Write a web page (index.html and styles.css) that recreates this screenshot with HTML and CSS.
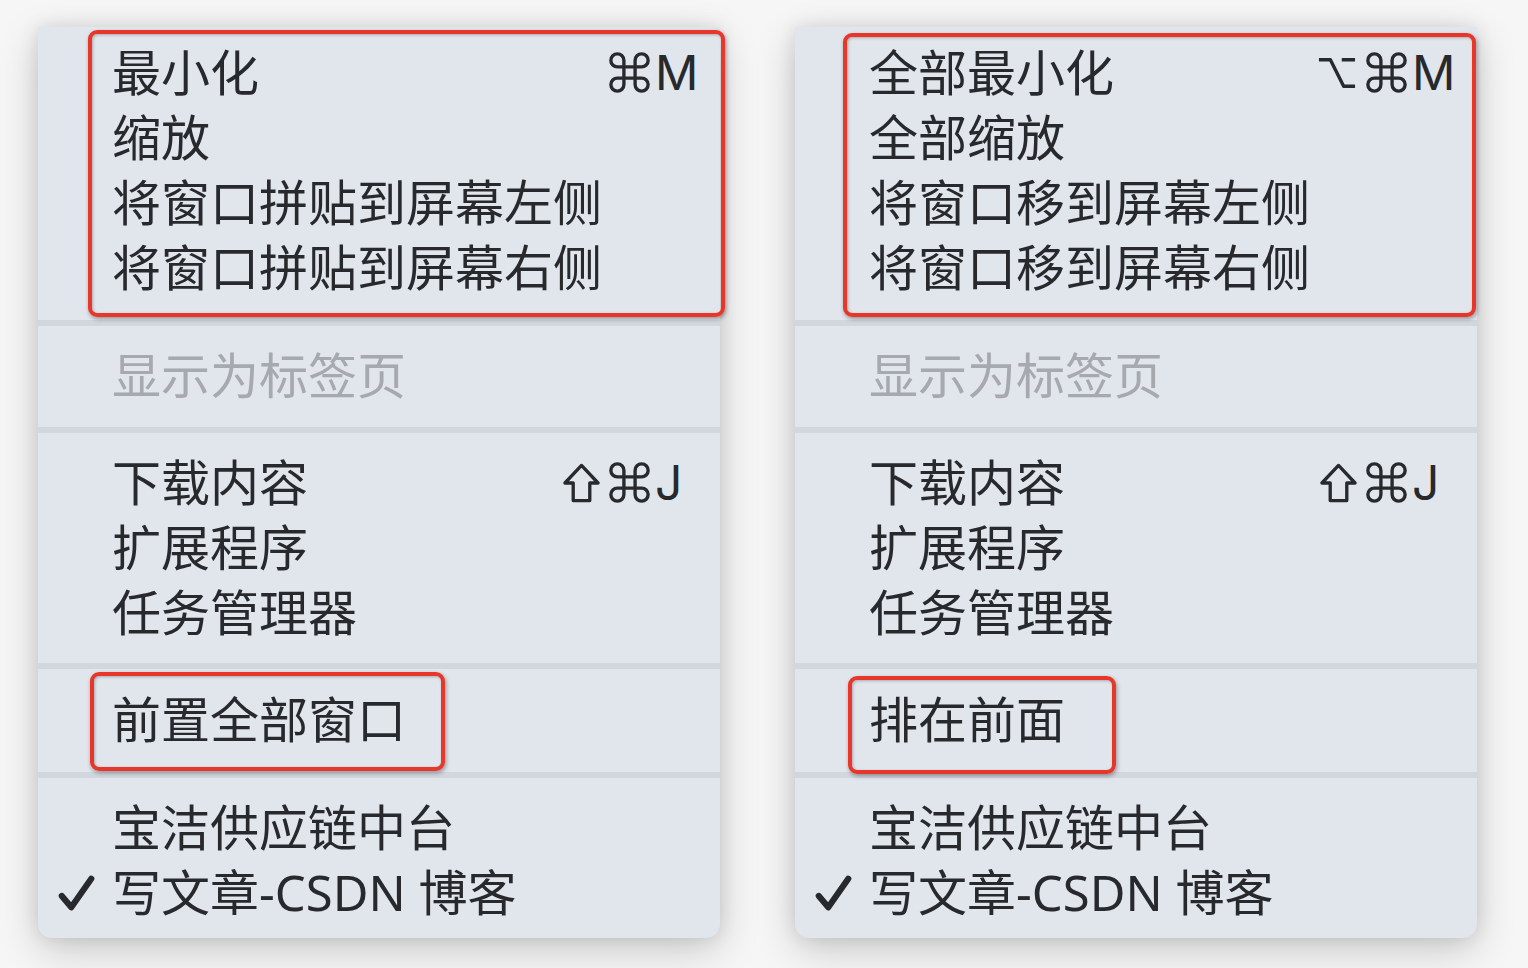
FILE: index.html
```html
<!DOCTYPE html>
<html lang="zh-CN">
<head>
<meta charset="utf-8">
<title>窗口菜单</title>
<link rel="stylesheet" href="styles.css">
</head>
<body>
<div class="stage">
  <div class="menu">
    <div class="section section-first">
      <div class="row"><span class="check"></span><span class="label">最小化</span>
        <span class="shortcut"><span class="mods"><svg class="key-icon cmd" viewBox="-2 -2 44 44"><path d="M14 14 V7 A7 7 0 1 0 7 14 H33 A7 7 0 1 0 26 7 V33 A7 7 0 1 0 33 26 H7 A7 7 0 1 0 14 33 Z"/></svg></span><span class="key">M</span></span></div>
      <div class="row"><span class="check"></span><span class="label">缩放</span></div>
      <div class="row"><span class="check"></span><span class="label">将窗口拼贴到屏幕左侧</span></div>
      <div class="row"><span class="check"></span><span class="label">将窗口拼贴到屏幕右侧</span></div>
    </div>
    <div class="sep"></div>
    <div class="section">
      <div class="row disabled"><span class="check"></span><span class="label">显示为标签页</span></div>
    </div>
    <div class="sep"></div>
    <div class="section section-three">
      <div class="row"><span class="check"></span><span class="label">下载内容</span>
        <span class="shortcut"><span class="mods"><svg class="key-icon shift" viewBox="0 0 40 40"><path d="M20 2 L37 20 H28.5 V38 H11.5 V20 H3 Z"/></svg><svg class="key-icon cmd" viewBox="-2 -2 44 44"><path d="M14 14 V7 A7 7 0 1 0 7 14 H33 A7 7 0 1 0 26 7 V33 A7 7 0 1 0 33 26 H7 A7 7 0 1 0 14 33 Z"/></svg></span><span class="key">J</span></span></div>
      <div class="row"><span class="check"></span><span class="label">扩展程序</span></div>
      <div class="row"><span class="check"></span><span class="label">任务管理器</span></div>
    </div>
    <div class="sep"></div>
    <div class="section section-four">
      <div class="row"><span class="check"></span><span class="label">前置全部窗口</span></div>
    </div>
    <div class="sep"></div>
    <div class="section section-last">
      <div class="row"><span class="check"></span><span class="label">宝洁供应链中台</span></div>
      <div class="row"><span class="check"><svg class="tick" viewBox="0 0 40 40"><path d="M4 22 L14 34 L35 4"/></svg></span><span class="label">写文章-CSDN 博客</span></div>
    </div>
    <div class="mark mark-left-top"></div>
    <div class="mark mark-left-bottom"></div>
  </div>

  <div class="menu">
    <div class="section section-first">
      <div class="row"><span class="check"></span><span class="label">全部最小化</span>
        <span class="shortcut"><span class="mods"><svg class="key-icon opt" viewBox="0 0 42 40"><path d="M2 6 H14 L28 34 H40 M26 6 H40"/></svg><svg class="key-icon cmd" viewBox="-2 -2 44 44"><path d="M14 14 V7 A7 7 0 1 0 7 14 H33 A7 7 0 1 0 26 7 V33 A7 7 0 1 0 33 26 H7 A7 7 0 1 0 14 33 Z"/></svg></span><span class="key">M</span></span></div>
      <div class="row"><span class="check"></span><span class="label">全部缩放</span></div>
      <div class="row"><span class="check"></span><span class="label">将窗口移到屏幕左侧</span></div>
      <div class="row"><span class="check"></span><span class="label">将窗口移到屏幕右侧</span></div>
    </div>
    <div class="sep"></div>
    <div class="section">
      <div class="row disabled"><span class="check"></span><span class="label">显示为标签页</span></div>
    </div>
    <div class="sep"></div>
    <div class="section section-three">
      <div class="row"><span class="check"></span><span class="label">下载内容</span>
        <span class="shortcut"><span class="mods"><svg class="key-icon shift" viewBox="0 0 40 40"><path d="M20 2 L37 20 H28.5 V38 H11.5 V20 H3 Z"/></svg><svg class="key-icon cmd" viewBox="-2 -2 44 44"><path d="M14 14 V7 A7 7 0 1 0 7 14 H33 A7 7 0 1 0 26 7 V33 A7 7 0 1 0 33 26 H7 A7 7 0 1 0 14 33 Z"/></svg></span><span class="key">J</span></span></div>
      <div class="row"><span class="check"></span><span class="label">扩展程序</span></div>
      <div class="row"><span class="check"></span><span class="label">任务管理器</span></div>
    </div>
    <div class="sep"></div>
    <div class="section section-four">
      <div class="row"><span class="check"></span><span class="label">排在前面</span></div>
    </div>
    <div class="sep"></div>
    <div class="section section-last">
      <div class="row"><span class="check"></span><span class="label">宝洁供应链中台</span></div>
      <div class="row"><span class="check"><svg class="tick" viewBox="0 0 40 40"><path d="M4 22 L14 34 L35 4"/></svg></span><span class="label">写文章-CSDN 博客</span></div>
    </div>
    <div class="mark mark-right-top"></div>
    <div class="mark mark-right-bottom"></div>
  </div>
</div>
</body>
</html>
```
FILE: styles.css
```css
html, body {
  margin: 0;
  padding: 0;
}
body {
  width: 1528px;
  height: 968px;
  overflow: hidden;
  background: #f6f6f6;
  font-family: "Noto Sans", "Noto Sans CJK SC", sans-serif;
  color: #27292d;
}
.stage {
  display: flex;
  gap: 75px;
  padding: 27px 0 0 38px;
}
.menu {
  position: relative;
  width: 682px;
  height: 911px;
  background: #e1e5ec;
  border-radius: 0 0 14px 14px;
  box-shadow: 0 12px 40px rgba(0, 0, 0, 0.18), 0 0 18px rgba(0, 0, 0, 0.1);
  box-sizing: border-box;
}
.section {
  padding: 17px 0 19px;
}
.section-first {
  padding: 13px 0 20px;
}
.section-three {
  padding: 17px 0 18px;
}
.section-four {
  padding: 18px 0 20px;
}
.section-last {
  padding: 17px 0 14px;
}
.sep {
  height: 6px;
  background: #d2d6dd;
}
.row {
  display: flex;
  align-items: center;
  height: 65px;
  padding: 0 20px;
  font-size: 49px;
  line-height: 65px;
  white-space: nowrap;
}
.check {
  width: 54px;
  flex: none;
  display: flex;
  align-items: center;
}
.tick {
  width: 38px;
  height: 38px;
  fill: none;
  stroke: #27292d;
  stroke-width: 6.5;
  stroke-linecap: round;
  stroke-linejoin: round;
  margin-top: 2px;
}
.label {
  flex: none;
}
.disabled {
  color: #a6aaaf;
}
.shortcut {
  margin-left: auto;
  display: flex;
  align-items: center;
}
.mods {
  display: flex;
  align-items: center;
  gap: 8px;
}
.key-icon {
  fill: none;
  stroke: #27292d;
  stroke-width: 3.6;
  stroke-linejoin: round;
}
.cmd {
  width: 41px;
  height: 41px;
}
.shift {
  width: 39px;
  height: 40px;
  stroke-width: 3.4;
}
.opt {
  width: 42px;
  height: 38px;
}
.key {
  width: 45px;
  margin-left: 5px;
  font-family: "Inter", sans-serif;
  font-size: 48px;
  line-height: 65px;
}
.mark {
  position: absolute;
  border: 4px solid #e7362a;
  border-radius: 9px;
  box-sizing: border-box;
  box-shadow: 1px 2px 4px rgba(0, 0, 0, 0.35), inset 1px 1px 3px rgba(0, 0, 0, 0.25);
}
.mark-left-top {
  left: 50px;
  top: 3px;
  width: 637px;
  height: 287px;
}
.mark-left-bottom {
  left: 52px;
  top: 645px;
  width: 355px;
  height: 99px;
}
.mark-right-top {
  left: 48px;
  top: 6px;
  width: 633px;
  height: 284px;
}
.mark-right-bottom {
  left: 53px;
  top: 649px;
  width: 268px;
  height: 98px;
}
```
